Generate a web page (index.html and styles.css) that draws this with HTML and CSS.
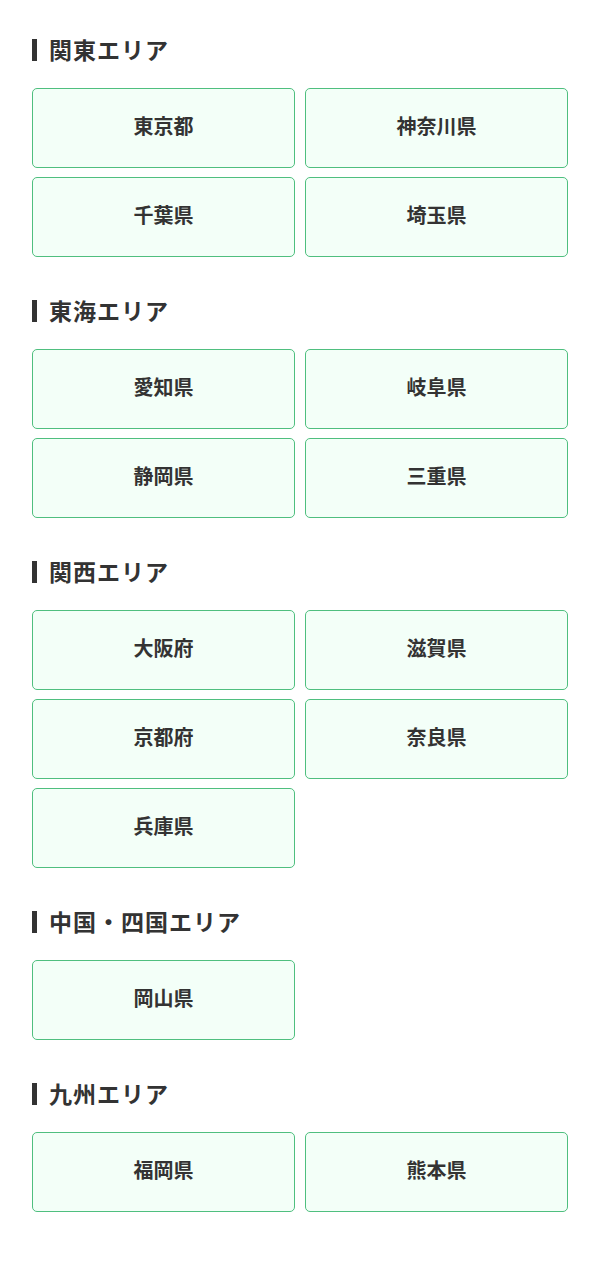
FILE: index.html
```html
<!DOCTYPE html>
<html lang="ja">
<head>
<meta charset="utf-8">
<link rel="stylesheet" href="styles.css">
</head>
<body>
<main class="page">
  <section class="area">
    <h2 class="area-title">関東エリア</h2>
    <div class="grid">
      <a class="pref">東京都</a>
      <a class="pref">神奈川県</a>
      <a class="pref">千葉県</a>
      <a class="pref">埼玉県</a>
    </div>
  </section>
  <section class="area">
    <h2 class="area-title">東海エリア</h2>
    <div class="grid">
      <a class="pref">愛知県</a>
      <a class="pref">岐阜県</a>
      <a class="pref">静岡県</a>
      <a class="pref">三重県</a>
    </div>
  </section>
  <section class="area">
    <h2 class="area-title">関西エリア</h2>
    <div class="grid">
      <a class="pref">大阪府</a>
      <a class="pref">滋賀県</a>
      <a class="pref">京都府</a>
      <a class="pref">奈良県</a>
      <a class="pref">兵庫県</a>
    </div>
  </section>
  <section class="area">
    <h2 class="area-title">中国・四国エリア</h2>
    <div class="grid">
      <a class="pref">岡山県</a>
    </div>
  </section>
  <section class="area">
    <h2 class="area-title">九州エリア</h2>
    <div class="grid">
      <a class="pref">福岡県</a>
      <a class="pref">熊本県</a>
    </div>
  </section>
</main>
</body>
</html>
```

FILE: styles.css
```css
html, body {
  margin: 0;
  padding: 0;
  background: #ffffff;
}
body {
  font-family: "Noto Sans CJK JP", "Noto Sans", sans-serif;
  color: #333333;
}
.page {
  padding: 33px 32px 30px;
}
.area {
  margin-bottom: 37px;
}
.area-title {
  margin: 0 0 23px;
  font-size: 23px;
  font-weight: 700;
  line-height: 32px;
  display: flex;
  align-items: center;
  letter-spacing: 1px;
}
.area-title::before {
  content: "";
  display: block;
  width: 5px;
  height: 22px;
  background: #333333;
  margin-right: 12px;
  margin-top: 2px;
}
.grid {
  display: grid;
  grid-template-columns: 1fr 1fr;
  column-gap: 10px;
  row-gap: 9px;
}
.pref {
  display: flex;
  align-items: center;
  justify-content: center;
  height: 80px;
  padding-bottom: 5px;
  box-sizing: border-box;
  border: 1px solid #4fbf7f;
  border-radius: 5px;
  background: #f3fff8;
  font-size: 20px;
  font-weight: 700;
  color: #333333;
  text-decoration: none;
}
```
